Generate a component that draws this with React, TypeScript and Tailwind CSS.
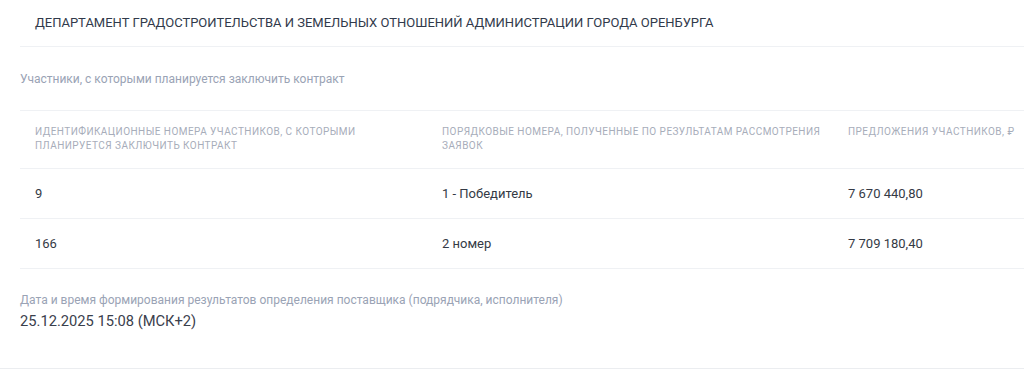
const rows = [
  { id: "9", place: "1 - Победитель", offer: "7 670 440,80" },
  { id: "166", place: "2 номер", offer: "7 709 180,40" },
];

const headCell = "h-[58px] pt-[14px] pl-[15px] border-b border-[#eff1f4]";
const headText = "block text-[10px] leading-[14px] tracking-[0.045em] uppercase text-[#a7adba]";
const bodyCell = "h-[50px] flex items-center pl-[15px] border-b border-[#eff1f4] text-[13px] text-[#343a45]";

export default function App() {
  return (
    <div className="bg-white font-['Roboto',sans-serif] border-b border-[#ebedf0]">
      <div className="pl-5">
        <div className="h-[47px] flex items-center px-[15px] border-b border-[#eff1f4]">
          <h2 className="text-[13px] text-[#313a4b] uppercase">
            Департамент градостроительства и земельных отношений администрации города Оренбурга
          </h2>
        </div>

        <div className="h-[64px] flex items-center border-b border-[#eff1f4]">
          <p className="text-[12px] text-[#9aa3b5]">
            Участники, с которыми планируется заключить контракт
          </p>
        </div>

        <div className="grid grid-cols-[407px_406px_1fr]">
          <div className={headCell}>
            <span className={`${headText} max-w-[360px]`}>
              Идентификационные номера участников, с которыми планируется заключить контракт
            </span>
          </div>
          <div className={headCell}>
            <span className={`${headText} max-w-[385px]`}>
              Порядковые номера, полученные по результатам рассмотрения заявок
            </span>
          </div>
          <div className={headCell}>
            <span className={`${headText} whitespace-nowrap`}>Предложения участников, ₽</span>
          </div>

          {rows.map((r) => (
            <div key={r.id} className="contents">
              <div className={bodyCell}>{r.id}</div>
              <div className={bodyCell}>{r.place}</div>
              <div className={bodyCell}>{r.offer}</div>
            </div>
          ))}
        </div>

        <div className="pt-[23px] pb-[37px]">
          <p className="text-[12px] leading-[16px] text-[#9aa3b5]">
            Дата и время формирования результатов определения поставщика (подрядчика, исполнителя)
          </p>
          <p className="mt-[3px] text-[14.7px] leading-[20px] text-[#3a404c]">25.12.2025 15:08 (МСК+2)</p>
        </div>
      </div>
    </div>
  );
}
